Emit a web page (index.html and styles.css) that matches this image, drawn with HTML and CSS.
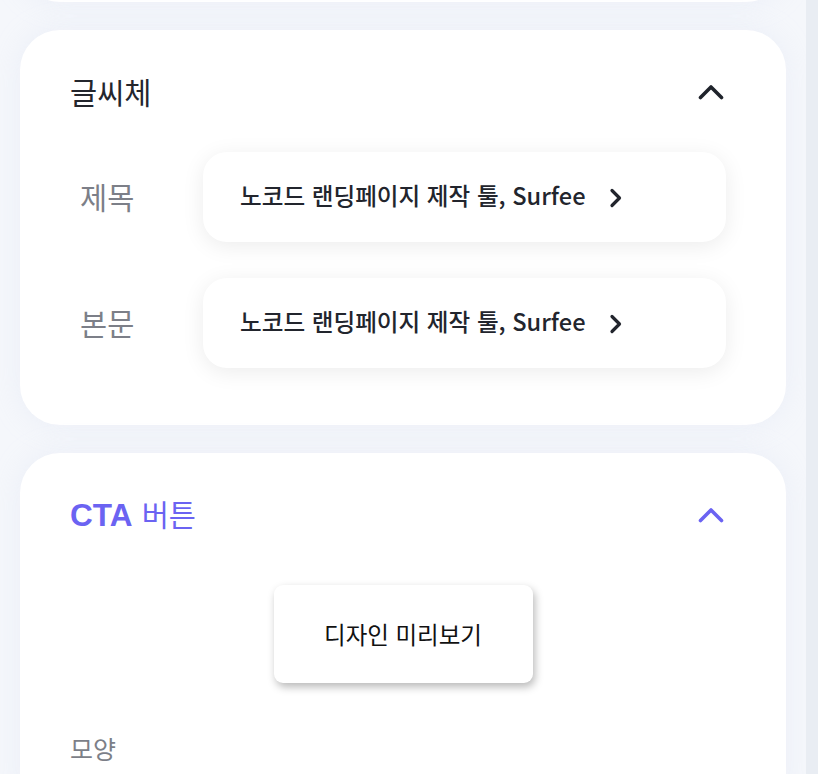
FILE: index.html
```html
<!DOCTYPE html>
<html lang="ko">
<head>
<meta charset="utf-8">
<title>디자인 설정</title>
<link rel="stylesheet" href="styles.css">
</head>
<body>
<div class="page">
  <main class="main">
    <section class="card card-prev"></section>

    <section class="card">
      <header class="card-head">
        <h2 class="card-title">글씨체</h2>
        <svg class="chev-up" width="26" height="16" viewBox="0 0 26 16"><path d="M2.5 13.5 L13 3 L23.5 13.5" fill="none" stroke="currentColor" stroke-width="3.6" stroke-linecap="round" stroke-linejoin="round"/></svg>
      </header>
      <div class="font-rows">
        <div class="font-row">
          <span class="font-label">제목</span>
          <button class="font-select">
            <span>노코드 랜딩페이지 제작 툴, Surfee</span>
            <svg class="chev-right" width="14" height="20" viewBox="0 0 14 20"><path d="M3 2.5 L10.5 10 L3 17.5" fill="none" stroke="currentColor" stroke-width="3.2" stroke-linecap="round" stroke-linejoin="round"/></svg>
          </button>
        </div>
        <div class="font-row">
          <span class="font-label">본문</span>
          <button class="font-select">
            <span>노코드 랜딩페이지 제작 툴, Surfee</span>
            <svg class="chev-right" width="14" height="20" viewBox="0 0 14 20"><path d="M3 2.5 L10.5 10 L3 17.5" fill="none" stroke="currentColor" stroke-width="3.2" stroke-linecap="round" stroke-linejoin="round"/></svg>
          </button>
        </div>
      </div>
    </section>

    <section class="card card-cta">
      <header class="card-head">
        <h2 class="card-title cta-title"><b>CTA</b> 버튼</h2>
        <svg class="chev-up chev-purple" width="26" height="16" viewBox="0 0 26 16"><path d="M2.5 13.5 L13 3 L23.5 13.5" fill="none" stroke="currentColor" stroke-width="3.6" stroke-linecap="round" stroke-linejoin="round"/></svg>
      </header>
      <div class="preview-wrap">
        <button class="preview-btn">디자인 미리보기</button>
      </div>
      <p class="sub-label">모양</p>
    </section>
  </main>
  <div class="scrollbar"></div>
</div>
</body>
</html>
```

FILE: styles.css
```css
* { box-sizing: border-box; }

html, body {
  margin: 0;
  padding: 0;
}

body {
  background: #f5f7fb;
  font-family: "Noto Sans CJK KR", "Noto Sans", sans-serif;
  color: #24262d;
}

.page {
  display: flex;
  height: 774px;
  overflow: hidden;
}

.main {
  flex: 1;
  padding: 0 20px;
  display: flex;
  flex-direction: column;
  gap: 28px;
}

.scrollbar {
  width: 12px;
  flex: none;
  background: #e9edf3;
}

.card {
  background: #ffffff;
  border-radius: 40px;
  box-shadow: 0 0 30px rgba(205, 215, 235, 0.22);
  padding: 44px 50px 57px 50px;
  flex: none;
}

.card-prev {
  height: 100px;
  margin-top: -98px;
  padding: 0;
}

.card-head {
  display: flex;
  align-items: center;
  justify-content: space-between;
  height: 36px;
  padding-right: 12px;
}

.card-title {
  margin: 0 0 3px 0;
  font-size: 29.5px;
  font-weight: 400;
  line-height: 36px;
  color: #24262d;
}

.chev-up {
  color: #1f232b;
  display: block;
}

.chev-purple {
  color: #6b63f2;
}

.cta-title {
  color: #6b63f2;
  font-size: 29.5px;
}

.cta-title b {
  font-family: "Liberation Sans", Arial, sans-serif;
  font-weight: 700;
  font-size: 31.5px;
  margin-right: 1px;
}

.font-rows {
  margin-top: 42px;
  display: flex;
  flex-direction: column;
  gap: 36px;
  padding-right: 10px;
}

.font-row {
  display: flex;
  align-items: center;
}

.font-label {
  width: 133px;
  flex: none;
  padding-left: 10px;
  padding-bottom: 3px;
  font-size: 29.5px;
  color: #7c7f88;
  line-height: 36px;
}

.font-select {
  flex: 1;
  height: 90px;
  border: none;
  background: #ffffff;
  border-radius: 24px;
  box-shadow: 0 4px 22px rgba(0, 0, 0, 0.08);
  display: flex;
  align-items: center;
  gap: 24px;
  padding: 0 0 4px 37px;
  font-family: inherit;
  font-size: 23.6px;
  font-weight: 500;
  color: #22252d;
  text-align: left;
  cursor: pointer;
}

.chev-right {
  color: #22252d;
  display: block;
  margin-top: 6px;
}

.preview-wrap {
  margin-top: 52px;
  display: flex;
  justify-content: center;
}

.preview-btn {
  width: 259px;
  height: 98px;
  border: none;
  border-radius: 9px;
  background: #ffffff;
  box-shadow: 2px 4px 8px rgba(0, 0, 0, 0.28);
  font-family: inherit;
  font-size: 23.5px;
  color: #111;
  cursor: pointer;
}

.sub-label {
  margin: 50px 0 0 0;
  font-size: 25px;
  line-height: 30px;
  color: #7c7f88;
}
```
